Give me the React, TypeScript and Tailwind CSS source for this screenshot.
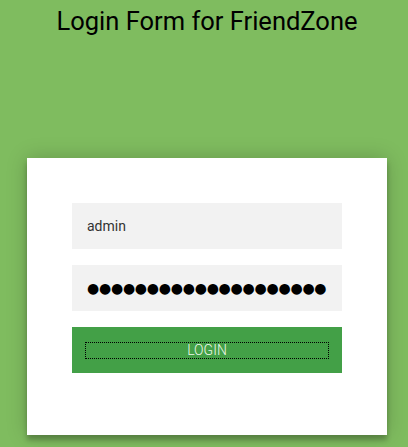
import React from 'react';

export default function App() {
    return (
        <div
            className="min-h-[447px] w-full bg-[#7fbc5f] pt-[6px]"
            style={{ fontFamily: 'Roboto, "Liberation Sans", sans-serif' }}
        >
            <h1 className="pl-[6px] text-center text-[25.5px] leading-[30px] font-normal text-black">
                Login Form for FriendZone
            </h1>
            <div className="ml-[27px] mt-[122px] w-[360px] bg-white p-[45px] pb-[62px] shadow-[0_0_20px_0_rgba(0,0,0,0.2),0_5px_5px_0_rgba(0,0,0,0.24)]">
                <form className="flex flex-col">
                    <input
                        type="text"
                        readOnly
                        value="admin"
                        className="mb-[16px] h-[46px] w-full bg-[#f2f2f2] px-[15px] text-[14px] text-[#333] outline-none"
                    />
                    <div
                        className="mb-[16px] flex h-[46px] w-full items-center bg-[#f2f2f2] pl-[15px] text-[14px] leading-none tracking-[-0.25px] text-black"
                        style={{ fontFamily: '"DejaVu Sans", sans-serif' }}
                    >
                        ●●●●●●●●●●●●●●●●●●●●
                    </div>
                    <button
                        type="button"
                        className="flex h-[46px] w-full items-center justify-center bg-[#43a047] px-[13px] pt-[1px] text-[14px] font-light uppercase text-[#eef7ea]"
                    >
                        <span className="flex h-[17px] w-full items-center justify-center border border-dotted border-black leading-[15px]">
                            Login
                        </span>
                    </button>
                </form>
            </div>
        </div>
    );
}
